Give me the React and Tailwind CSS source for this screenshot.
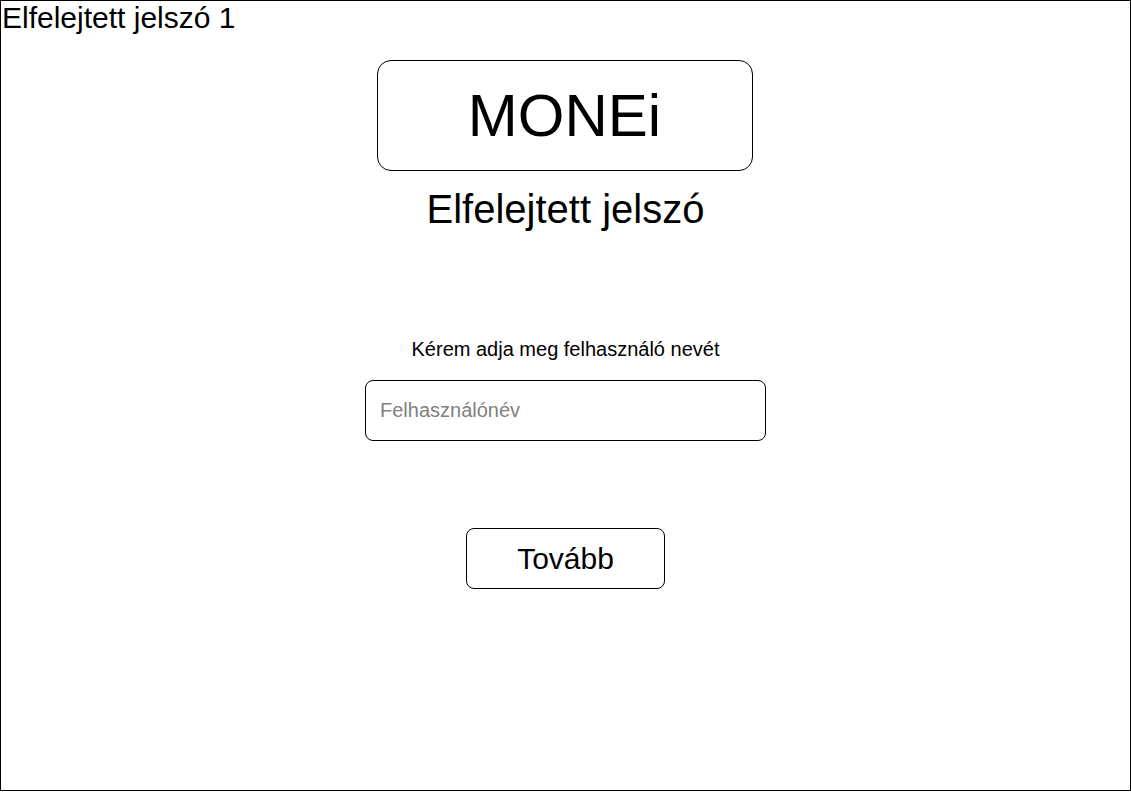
export default function App() {
  return (
    <div className="w-[1131px] h-[791px] border border-black bg-white text-black font-['Liberation_Sans',Arial,sans-serif]">
      <div className="px-[1px] text-[30px] leading-[34px]">Elfelejtett jelszó 1</div>
      <div className="flex flex-col items-center">
        <div className="mt-[25px] mr-[2px] w-[376px] h-[111px] rounded-[14px] border border-black flex items-center justify-center text-[60px]">
          MONEi
        </div>
        <h1 className="mt-[15px] text-[40px] leading-[46px]">Elfelejtett jelszó</h1>
        <p className="mt-[106px] text-[20px] leading-[23px]">Kérem adja meg felhasználó nevét</p>
        <input
          type="text"
          placeholder="Felhasználónév"
          className="mt-[19px] w-[401px] h-[61px] rounded-[8px] border border-black px-[14px] text-[20px] outline-none placeholder:text-[#808080]"
        />
        <button className="mt-[87px] w-[199px] h-[61px] rounded-[8px] border border-black bg-white text-[30px]">
          Tovább
        </button>
      </div>
    </div>
  );
}
